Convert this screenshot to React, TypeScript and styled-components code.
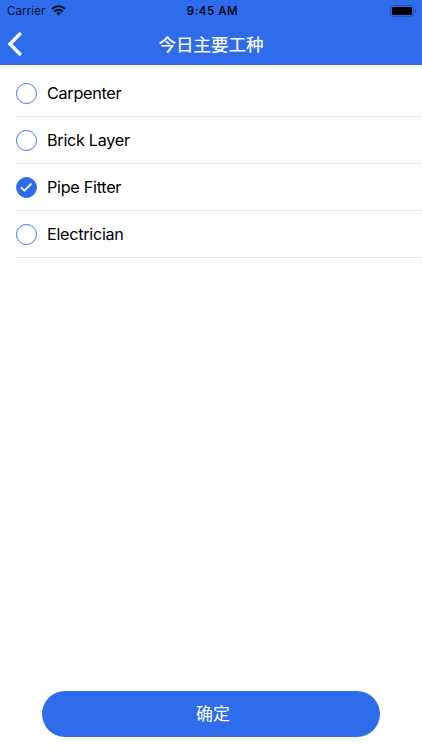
import React, { useState } from 'react';
import styled, { createGlobalStyle } from 'styled-components';

const Global = createGlobalStyle`
  * { box-sizing: border-box; }
  body { margin: 0; background: #fff; }
  button { font: inherit; border: 0; padding: 0; background: none; }
`;
const Screen = styled.main`
  display: flex; flex-direction: column; width: 100%; height: 750px;
  font-family: Inter, "Noto Sans CJK SC", sans-serif; color: #000; overflow: hidden;
`;
const Header = styled.header`background: #2e6ceb; height: 65px; flex: none;`;
const StatusBar = styled.div`
  height: 22px; display: grid; grid-template-columns: 1fr auto 1fr; align-items: center;
  padding: 0 5px 0 7px; font-size: 11.5px; line-height: 22px;
`;
const Carrier = styled.div`
  display: flex; align-items: center; gap: 6px; letter-spacing: 0.1px; color: #07122b;
`;
const Wifi = styled.svg`margin-top: -1px;`;
const Clock = styled.time`font-weight: 600; letter-spacing: 0.5px; color: #030a1a; padding-left: 1px;`;
const Battery = styled.svg`justify-self: end; margin-top: -1px;`;
const NavBar = styled.nav`
  height: 43px; display: grid; grid-template-columns: 30px 1fr 30px; align-items: center;
`;
const BackButton = styled.button`height: 43px; display: flex; align-items: center; padding-left: 7px;`;
const Title = styled.h1`
  margin: 0; padding-top: 2px; font-size: 17.5px; line-height: 41px; font-weight: 400;
  color: #fff; text-align: center; -webkit-text-stroke: 0.2px #fff;
`;
const List = styled.div`flex: 1; padding-top: 4.6px;`;
const Row = styled.button`
  display: flex; align-items: center; width: 100%; height: 47.2px;
  padding-left: 16px; text-align: left; color: #000;
`;
const Radio = styled.span<{ $checked: boolean }>`
  width: 21px; height: 21px; border-radius: 50%; border: 1px solid #3c74ea; flex: none;
  display: grid; place-items: center; background: ${p => (p.$checked ? '#2e6ceb' : '#fff')};
`;
const Label = styled.span`
  margin: -1px 0 0 10px; line-height: 40px; font-size: 16.2px; letter-spacing: -0.28px;
`;
const Line = styled.div`height: 1px; background: #e6e6e6; margin: -1px 0 0 16px;`;
const Footer = styled.footer`padding: 0 42px 13px;`;
const Confirm = styled.button`
  width: 100%; height: 46px; border-radius: 23px; background: #2e6ceb; color: #fff;
  font-size: 17px; line-height: 46px; padding-left: 4px;
`;

const trades = ['Carpenter', 'Brick Layer', 'Pipe Fitter', 'Electrician'];

export default function App() {
  const [selected, setSelected] = useState('Pipe Fitter');
  return (
    <Screen>
      <Global />
      <Header>
        <StatusBar>
          <Carrier>
            Carrier
            <Wifi width="15" height="11" viewBox="0 0 15 11" fill="none" stroke="#07122b" strokeWidth="1.9">
              <path d="M.9 4a9.3 9.3 0 0 1 13.2 0M3.2 6.5a6 6 0 0 1 8.6 0" />
              <path d="M5.2 8.3a3.2 3.2 0 0 1 4.6 0L7.5 10.7z" fill="#07122b" stroke="none" />
            </Wifi>
          </Carrier>
          <Clock>9:45 AM</Clock>
          <Battery width="27" height="12" viewBox="0 0 27 12">
            <rect x=".5" y=".5" width="23" height="11" rx="3" fill="none" stroke="#2250ad" />
            <rect x="2" y="2" width="20" height="8" rx="1.2" />
            <path d="M25 4v4q1.5-.5 1.5-2T25 4" fill="#2250ad" />
          </Battery>
        </StatusBar>
        <NavBar>
          <BackButton aria-label="Back">
            <svg width="15" height="24" viewBox="0 0 15 24" fill="none" stroke="#fff" strokeWidth="3.4">
              <path d="M12.8 2 3 12l9.8 10" strokeLinecap="round" />
            </svg>
          </BackButton>
          <Title>今日主要工种</Title>
        </NavBar>
      </Header>
      <List role="radiogroup">
        {trades.map(trade => (
          <React.Fragment key={trade}>
            <Row role="radio" aria-checked={trade === selected} onClick={() => setSelected(trade)}>
              <Radio $checked={trade === selected}>
                {trade === selected && (
                  <svg width="13" height="11" viewBox="0 0 13 11" fill="none" stroke="#fff" strokeWidth="1.7">
                    <path d="m1 5.3 3.4 3.4L11.4 1.7" />
                  </svg>
                )}
              </Radio>
              <Label>{trade}</Label>
            </Row>
            <Line />
          </React.Fragment>
        ))}
      </List>
      <Footer><Confirm>确定</Confirm></Footer>
    </Screen>
  );
}
